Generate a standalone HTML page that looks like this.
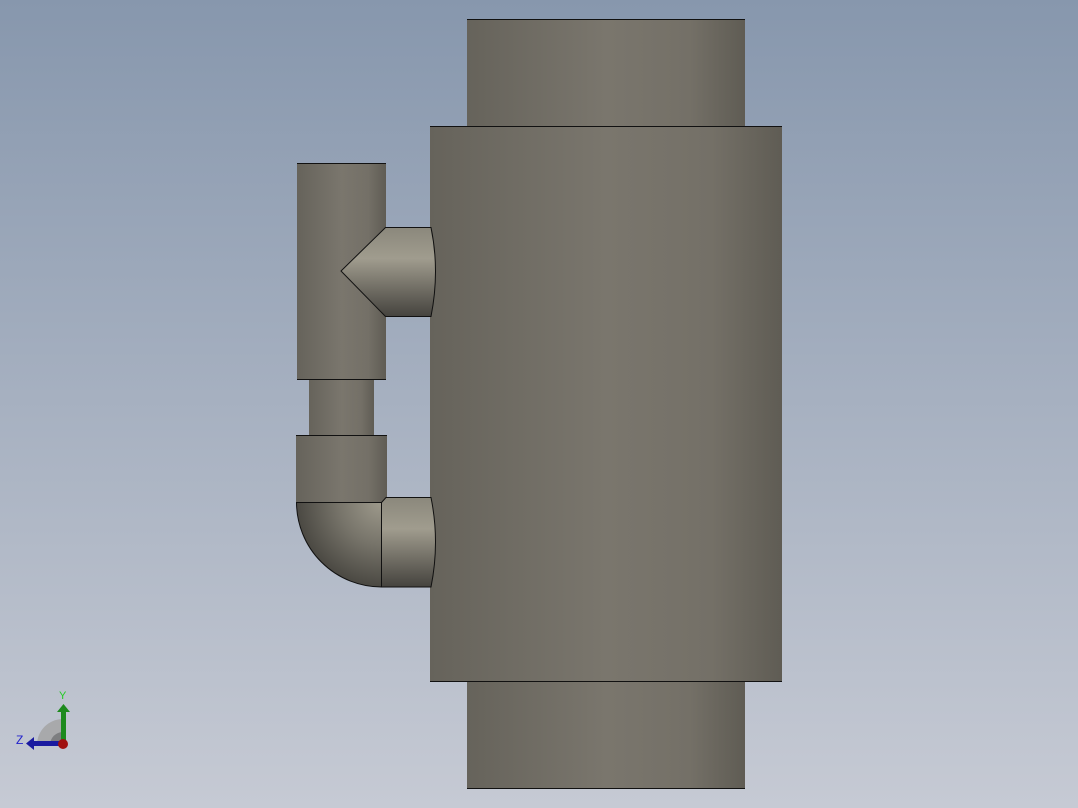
<!DOCTYPE html>
<html><head><style>html,body{margin:0;padding:0;width:1078px;height:808px;overflow:hidden}</style></head><body>
<svg width="1078" height="808" xmlns="http://www.w3.org/2000/svg">
<defs>
<linearGradient id="bg" x1="0" y1="0" x2="0" y2="1"><stop offset="0" stop-color="#8797ad"/><stop offset="1" stop-color="#c6cad4"/></linearGradient>
<linearGradient id="cyl" x1="0" y1="0" x2="1" y2="0"><stop offset="0" stop-color="#66635b"/><stop offset="0.5" stop-color="#7a766d"/><stop offset="0.8" stop-color="#747067"/><stop offset="1" stop-color="#5f5c54"/></linearGradient>
<linearGradient id="br" x1="0" y1="0" x2="0" y2="1"><stop offset="0" stop-color="#8b887c"/><stop offset="0.35" stop-color="#a09c8e"/><stop offset="0.7" stop-color="#6f6c63"/><stop offset="1" stop-color="#45433e"/></linearGradient>
<radialGradient id="elb" cx="381" cy="502" r="85" gradientUnits="userSpaceOnUse"><stop offset="0" stop-color="#9e9a8c"/><stop offset="0.5" stop-color="#77746a"/><stop offset="1" stop-color="#4a4842"/></radialGradient>
</defs>
<rect width="1078" height="808" fill="url(#bg)"/>
<rect x="467" y="19" width="278" height="108" fill="url(#cyl)"/>
<rect x="467" y="681" width="278" height="108" fill="url(#cyl)"/>
<rect x="430" y="126" width="352" height="556" fill="url(#cyl)"/>
<rect x="297" y="163" width="89" height="217" fill="url(#cyl)"/>
<rect x="309" y="379" width="65" height="57" fill="url(#cyl)"/>
<rect x="296" y="435" width="91" height="68" fill="url(#cyl)"/>
<g stroke="#111" stroke-width="1">
<path d="M385.5 227.5 L431 227.5 Q440 271 431 316.5 L385.5 316.5 L341 271 Z" fill="url(#br)"/>
<path d="M296.5 502.5 L381.5 502.5 L381.5 587 A85 85 0 0 1 296.5 502.5 Z" fill="url(#elb)"/>
<path d="M381.5 502.5 L386 497.5 L431 497.5 Q440 542 431 587 L381.5 587 Z" fill="url(#br)"/>
<path d="M467 19.5H745M430 126.5H782M430 681.5H782M467 788.5H745M297 163.5H386M297 379.5H386M296 435.5H387" fill="none"/>
</g>
<g>
<path d="M37 745 A26 26 0 0 1 63 719 L63 745 Z" fill="#a8a9ab"/>
<path d="M50 745 A13 13 0 0 1 63 732 L63 745 Z" fill="#7d7e80"/>
<rect x="61" y="711" width="5" height="32" fill="#1d8a1d"/>
<path d="M57 712 L63.5 704 L70 712 Z" fill="#1d8a1d"/>
<rect x="33" y="741" width="30" height="5" fill="#1a1aa0"/>
<path d="M34 737 L26 743.5 L34 750 Z" fill="#1a1aa0"/>
<circle cx="63" cy="744" r="5" fill="#a01010"/>
<text x="59" y="699" font-family="Liberation Sans,sans-serif" font-size="11" fill="#2c2">Y</text>
<text x="16" y="744" font-family="Liberation Sans,sans-serif" font-size="12" fill="#22c">Z</text>
</g>
</svg>
</body></html>
